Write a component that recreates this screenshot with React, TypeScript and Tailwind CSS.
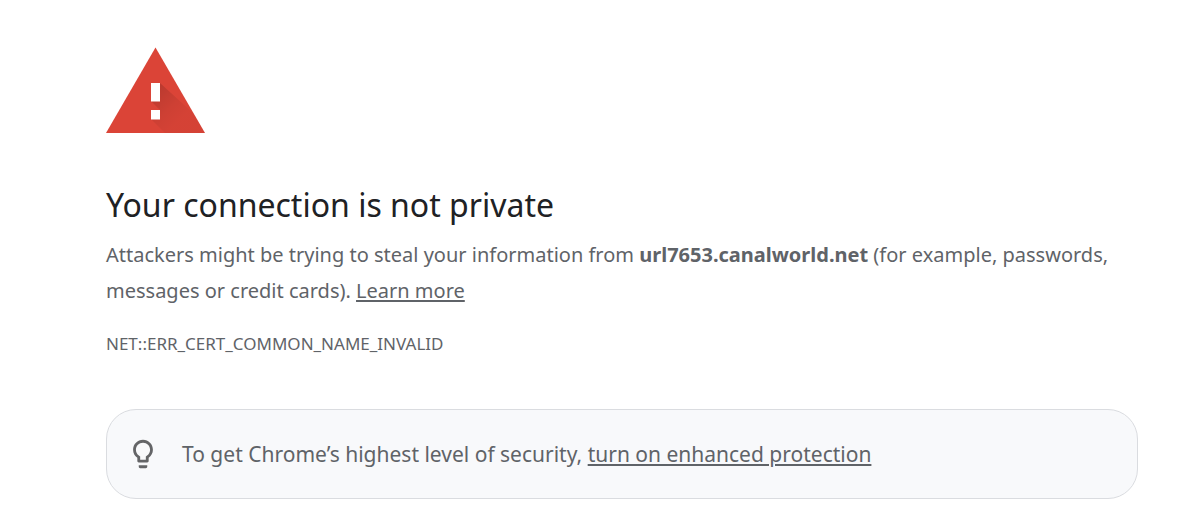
function WarningIcon() {
  return (
    <svg className="block h-[86px] w-[100px]" viewBox="0 0 100 86" role="img" aria-label="Warning">
      <defs>
        <linearGradient id="shade" x1="50" y1="45" x2="76" y2="71" gradientUnits="userSpaceOnUse">
          <stop offset="0" stopColor="#000" stopOpacity="0.14" />
          <stop offset="0.6" stopColor="#000" stopOpacity="0.06" />
          <stop offset="1" stopColor="#000" stopOpacity="0.03" />
        </linearGradient>
      </defs>
      <path d="M49.5 .5 99 86H0Z" fill="#db4437" />
      <path d="M54 36 87 66 99 86H59L45 72 54 63 45 54Z" fill="url(#shade)" />
      <path d="M45 36h9v18.5h-9zM45 63h9v9.5h-9z" fill="#fff" />
    </svg>
  );
}

function BulbIcon() {
  return (
    <svg className="size-[34px] shrink-0" viewBox="0 0 24 24" fill="#646567" aria-hidden="true">
      <path d="M9 21c0 .5.4 1 1 1h4c.6 0 1-.5 1-1v-1H9v1zm3-19C8.1 2 5 5.1 5 9c0 2.4 1.2 4.5 3 5.7V17c0 .5.4 1 1 1h6c.6 0 1-.5 1-1v-2.3c1.8-1.3 3-3.4 3-5.7 0-3.9-3.1-7-7-7zm2.9 11.1l-.9.6V16h-4v-2.3l-.9-.6C7.8 12.2 7 10.6 7 9c0-2.8 2.2-5 5-5s5 2.2 5 5c0 1.6-.8 3.2-2.1 4.1z" />
    </svg>
  );
}

export default function App() {
  return (
    <main className="bg-white pt-[47px] pr-[51px] pb-4 pl-[106px] font-['Segoe_UI','Noto_Sans',sans-serif] text-[#5f6368]">
      <WarningIcon />
      <h1 className="mt-12 text-[32px] leading-[48px] text-[#202124]">Your connection is not private</h1>
      <p className="mt-2 text-[20px] leading-9">
        Attackers might be trying to steal your information from <strong>url7653.canalworld.net</strong> (for
        example, passwords, messages or credit cards).{' '}
        <a href="#learn-more" className="underline decoration-2 underline-offset-2">
          Learn more
        </a>
      </p>
      <p className="mt-5 text-[17px] leading-[30px]">NET::ERR_CERT_COMMON_NAME_INVALID</p>
      <section className="mt-[50px] flex min-h-[90px] items-center gap-[22px] rounded-[30px] border border-[#dadce0] bg-[#f8f9fb] px-[19px] py-6">
        <BulbIcon />
        <p className="text-[21px] leading-9">
          To get Chrome’s highest level of security,{' '}
          <a href="#enhanced-protection" className="underline decoration-2 underline-offset-2">
            turn on enhanced protection
          </a>
        </p>
      </section>
    </main>
  );
}
